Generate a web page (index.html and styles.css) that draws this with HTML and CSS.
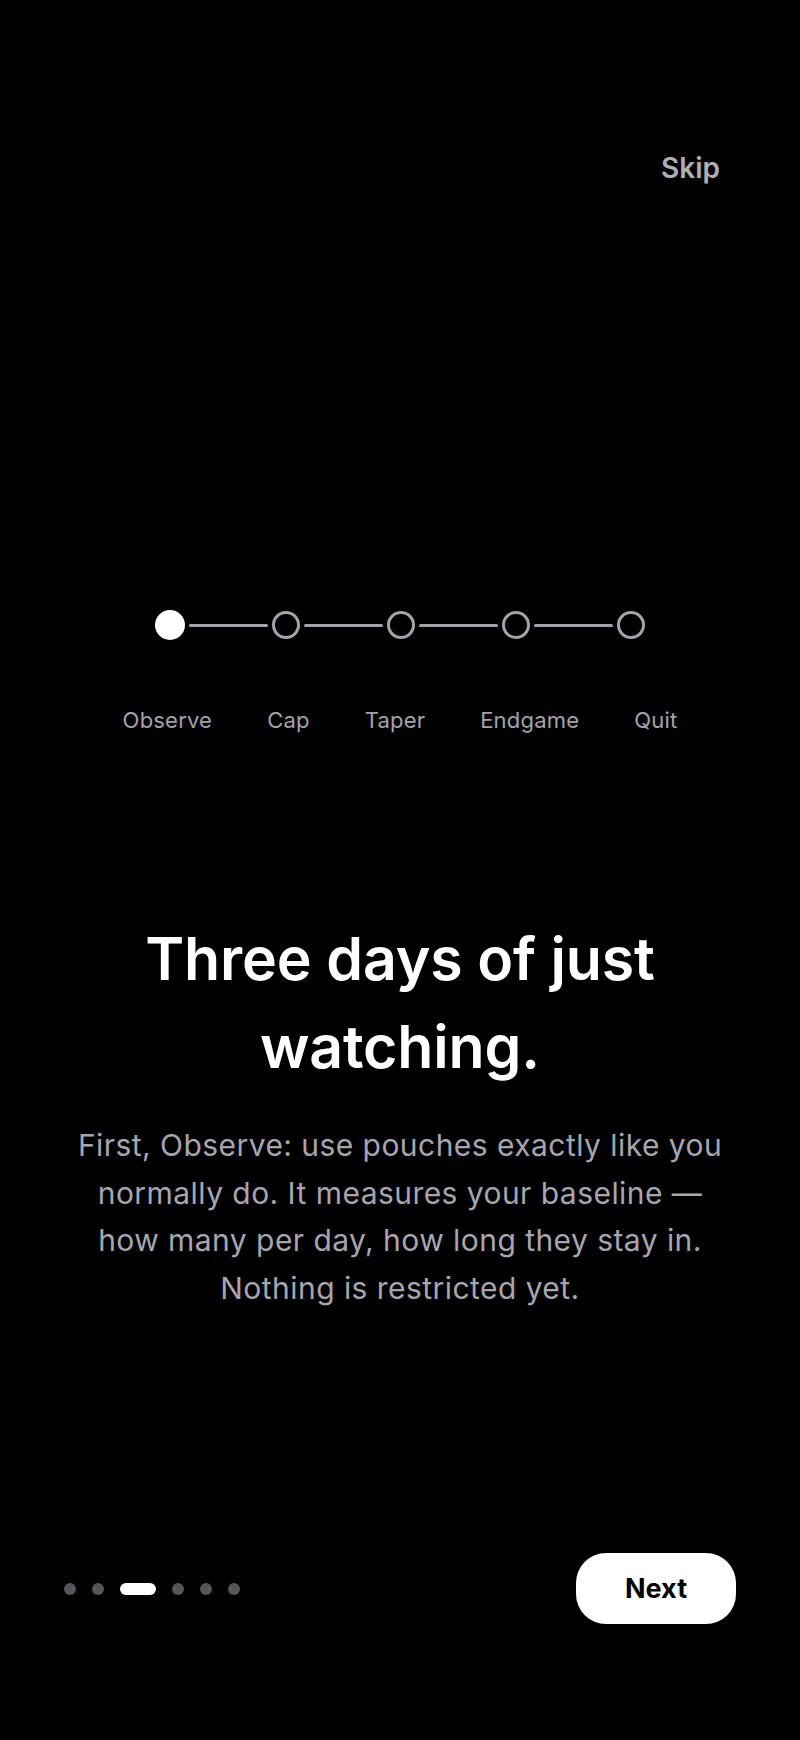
FILE: index.html
```html
<!DOCTYPE html>
<html lang="en">
<head>
<meta charset="utf-8">
<title>Onboarding – Observe</title>
<link rel="stylesheet" href="styles.css">
</head>
<body>
<div class="screen">
  <header class="topbar">
    <button class="skip">Skip</button>
  </header>

  <main class="content">
    <div class="stepper">
      <span class="node node-active"></span>
      <span class="link"></span>
      <span class="node"></span>
      <span class="link"></span>
      <span class="node"></span>
      <span class="link"></span>
      <span class="node"></span>
      <span class="link"></span>
      <span class="node"></span>
    </div>
    <div class="labels">
      <span>Observe</span>
      <span>Cap</span>
      <span>Taper</span>
      <span>Endgame</span>
      <span>Quit</span>
    </div>

    <h1 class="title">Three days of just watching.</h1>
    <p class="body">First, Observe: use pouches exactly like you normally do. It measures your baseline — how many per day, how long they stay in. Nothing is restricted yet.</p>
  </main>

  <footer class="bottombar">
    <div class="pager">
      <span class="dot"></span>
      <span class="dot"></span>
      <span class="dot dot-active"></span>
      <span class="dot"></span>
      <span class="dot"></span>
      <span class="dot"></span>
    </div>
    <button class="next">Next</button>
  </footer>
</div>
</body>
</html>
```

FILE: styles.css
```css
* {
  box-sizing: border-box;
}

html, body {
  margin: 0;
  padding: 0;
  background: #000;
}

body {
  font-family: Inter, "Noto Sans", "Liberation Sans", sans-serif;
  color: #fff;
}

.screen {
  height: 1740px;
  display: flex;
  flex-direction: column;
  padding: 0 64px;
}

.topbar {
  display: flex;
  justify-content: flex-end;
  padding-top: 143px;
}

.skip {
  background: none;
  border: 0;
  padding: 8px 16px;
  font-family: inherit;
  font-size: 28px;
  line-height: 34px;
  font-weight: 600;
  color: #aeaeb4;
}

.content {
  display: flex;
  flex-direction: column;
  align-items: center;
}

.stepper {
  margin-top: 417px;
  display: flex;
  align-items: center;
  gap: 4px;
  height: 30px;
}

.node {
  width: 28px;
  height: 28px;
  border-radius: 50%;
  border: 3px solid #a3a3ab;
}

.node-active {
  width: 30px;
  height: 30px;
  border: 0;
  background: #fff;
}

.link {
  width: 79px;
  height: 3px;
  border-radius: 2px;
  background: #a3a3ab;
}

.labels {
  margin-top: 67px;
  display: flex;
  justify-content: center;
  gap: 55px;
  font-size: 22px;
  line-height: 26px;
  color: #a3a3ab;
  letter-spacing: 0.2px;
}

.title {
  margin: 182px 0 0;
  width: 620px;
  text-align: center;
  font-size: 59px;
  line-height: 88px;
  font-weight: 600;
  letter-spacing: -0.15px;
  color: #fff;
}

.body {
  margin: 31px 0 0;
  width: 660px;
  text-align: center;
  font-size: 30px;
  line-height: 47.7px;
  letter-spacing: 0.45px;
  color: #a6a6ae;
}

.bottombar {
  margin-top: auto;
  padding-bottom: 116px;
  display: flex;
  align-items: center;
  justify-content: space-between;
}

.pager {
  display: flex;
  align-items: center;
  gap: 16px;
}

.dot {
  width: 12px;
  height: 12px;
  border-radius: 6px;
  background: #56565a;
}

.dot-active {
  width: 36px;
  background: #fff;
}

.next {
  width: 160px;
  height: 71px;
  border: 0;
  border-radius: 30px;
  background: #fff;
  color: #000;
  font-family: inherit;
  font-size: 27px;
  font-weight: 700;
}
```
